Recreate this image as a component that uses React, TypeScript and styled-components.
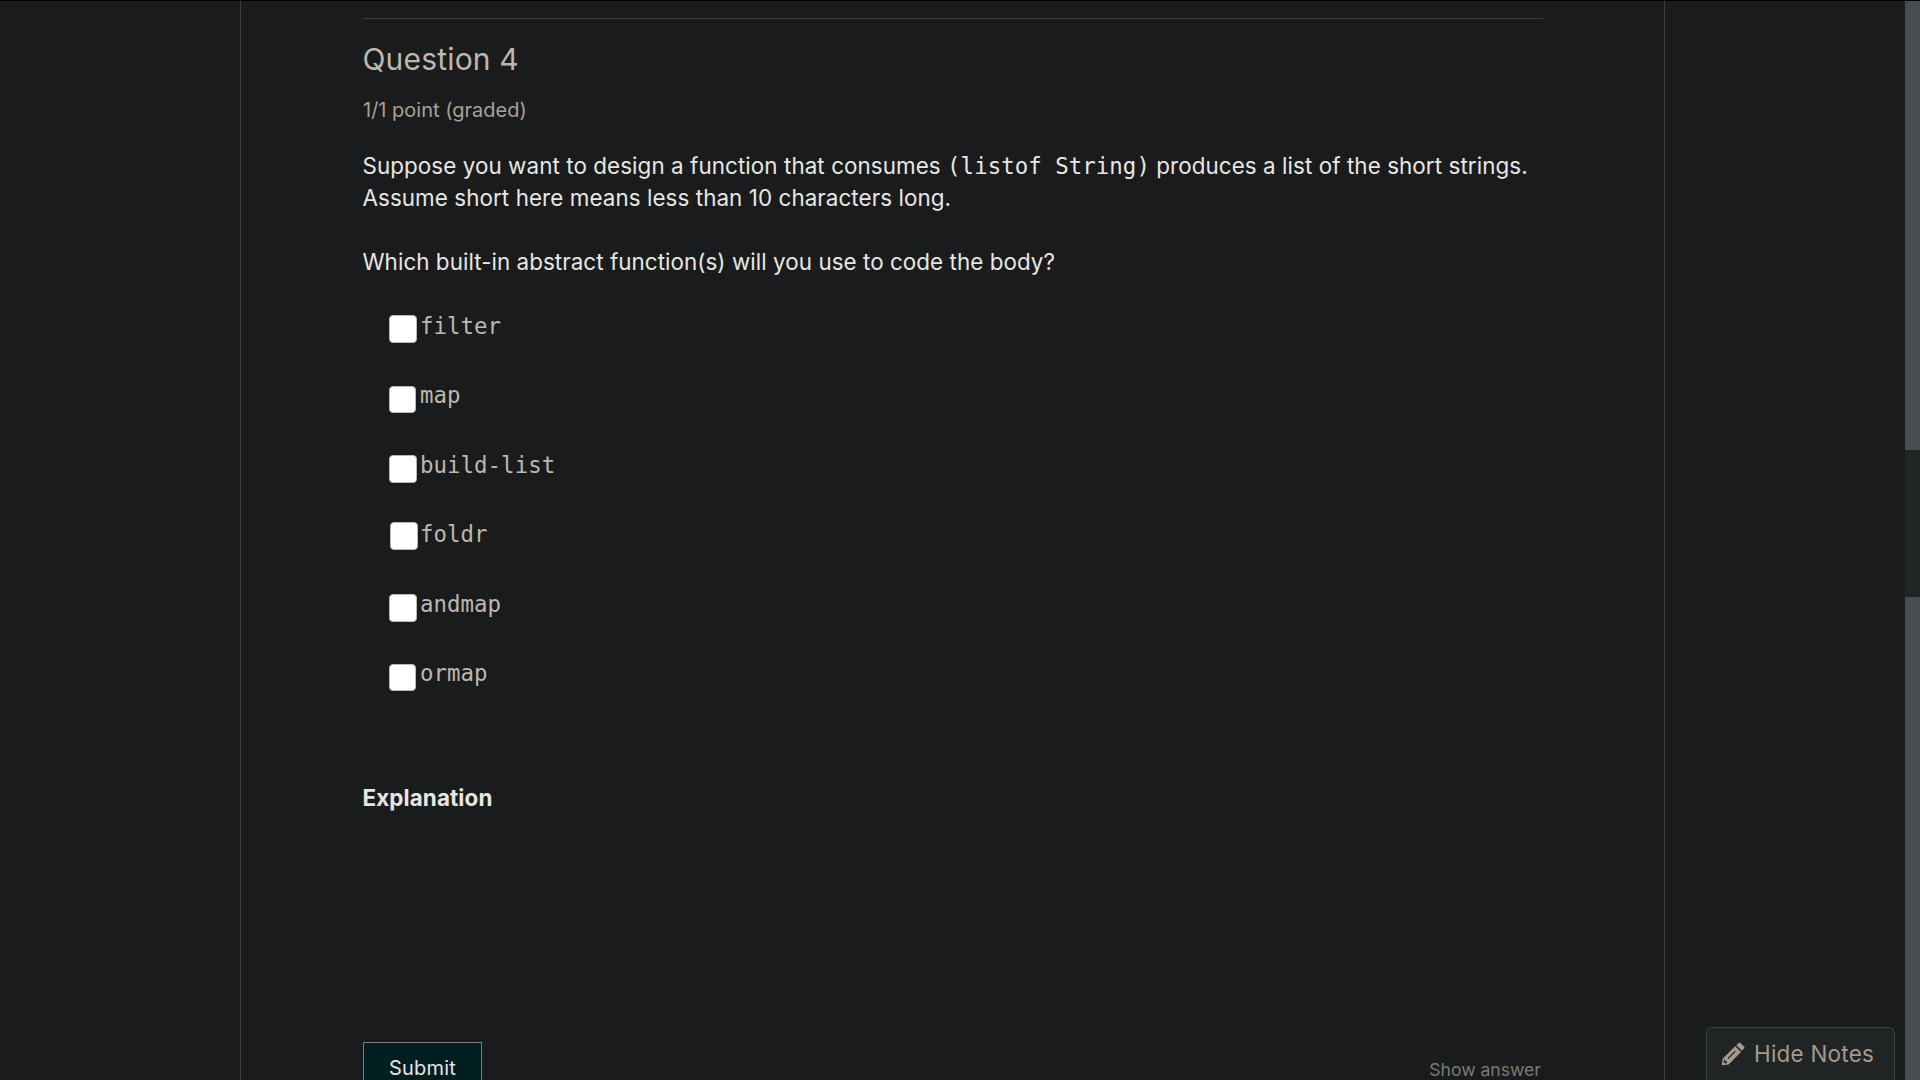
import React from 'react';
import styled, { createGlobalStyle } from 'styled-components';

const GlobalStyle = createGlobalStyle`
  * { box-sizing: border-box; }
  html, body { margin: 0; background: #1a1b1c; overflow: hidden; }
  body { font-family: Inter, "Liberation Sans", sans-serif; }
`;

const Page = styled.div`
  display: flex;
  width: 1920px;
  height: 1080px;
  overflow: hidden;
  background: #1a1b1c;
  border-top: 1px solid #000;
`;

const Gutter = styled.aside`
  width: 240px;
  flex: none;
`;

const Main = styled.main`
  width: 1425px;
  flex: none;
  border: solid #3b3f41;
  border-width: 0 1px;
  padding: 17px 121px 0 122px;
  overflow: hidden;
`;

const Problem = styled.section`
  display: flex;
  flex-direction: column;
  border-top: 1px solid #3b3f41;
`;

const Title = styled.h3`
  margin: 20px 0 0 -0.5px;
  font-size: 30px;
  font-weight: 400;
  line-height: 40px;
  letter-spacing: 0.18px;
  color: #bdb7af;
`;

const Progress = styled.div`
  margin-top: 17px;
  font-size: 20px;
  line-height: 28px;
  color: #a8a095;
`;

const Text = styled.p<{ $top: number; $spacing: number }>`
  margin: ${p => p.$top}px 0 0 -0.5px;
  font-size: 22.4px;
  line-height: 32px;
  letter-spacing: ${p => p.$spacing}px;
  color: #e8e6e3;
  white-space: nowrap;
`;

const Code = styled.code`
  font-family: "DejaVu Sans Mono", monospace;
  font-size: 22.4px;
  line-height: 1;
  letter-spacing: 0.04px;
`;

const Options = styled.div`
  display: flex;
  flex-direction: column;
  margin: 32px 0 0 26px;
`;

const Option = styled.label<{ $height: number }>`
  display: flex;
  height: ${p => p.$height}px;
  line-height: 32px;
  color: #bdb7af;
`;

const Box = styled.span<{ $size: number; $top: number; $left: number; $gap: number }>`
  flex: none;
  width: ${p => p.$size}px;
  height: ${p => p.$size}px;
  margin: ${p => p.$top}px ${p => p.$gap}px 0 ${p => p.$left}px;
  border: 1px solid #bdb7af;
  border-radius: 4px;
  background: #fff;
`;

const OptionCode = styled(Code)`
  line-height: 32px;
`;

const Explanation = styled.strong`
  margin: 93px 0 0 -0.5px;
  font-size: 22.4px;
  font-weight: 700;
  line-height: 32px;
  letter-spacing: 0.12px;
  color: #e8e6e3;
`;

const Actions = styled.div`
  display: flex;
  justify-content: space-between;
  align-items: flex-start;
  margin-top: 228px;
`;

const Submit = styled.button`
  width: 119px;
  height: 52px;
  padding: 0;
  border: 1px solid #857c6d;
  background: #001d20;
  color: #e8e6e3;
  font: 400 20px/50px Inter, sans-serif;
  letter-spacing: 0.22px;
`;

const ShowAnswer = styled.button`
  margin: 15px 2px 0 0;
  padding: 0;
  border: 0;
  background: none;
  color: #7d7a75;
  font: 400 17.6px/26px Inter, sans-serif;
`;

const Side = styled.aside`
  display: flex;
  flex: 1;
  flex-direction: column;
  justify-content: flex-end;
  align-items: flex-end;
  padding-right: 10px;
`;

const HideNotes = styled.button`
  display: flex;
  align-items: center;
  gap: 9px;
  width: 189px;
  height: 53px;
  padding: 0 0 1px 14px;
  border: 1px solid #3c4143;
  border-bottom: 0;
  border-radius: 6px 6px 0 0;
  background: #202425;
  color: #a59b8c;
  font: 400 22.4px/50px Inter, sans-serif;
  letter-spacing: 0.27px;
  white-space: nowrap;
`;

const Scroll = styled.div`
  width: 15px;
  flex: none;
  padding-top: 449px;
  background: #474c4e;
`;

const Thumb = styled.div`
  height: 147px;
  background: #202425;
`;

const Pencil = () => (
  <svg width="24" height="24" viewBox="0 0 24 24" fill="currentColor">
    <path fillRule="evenodd" d="M.7 23.2 1.8 16.6 14.2 4.2l5.8 5.8L7.6 22.4.7 23.2Zm2-3.1 1.3 1.4 1.9-.5v-1.8H4.1v-1.7h-.8l-.6 2.6Zm3.9-4 .8.8 7.4-7.4-.8-.8-7.4 7.4Z" />
    <path d="m15.3 3.2 2-2q1.2-1.2 2.4 0l3.2 3.2q1.2 1.2 0 2.4l-2 2-5.6-5.6Z" />
  </svg>
);

const options = [
  { name: 'filter', height: 69, size: 28, top: 5, left: 0, gap: 3 },
  { name: 'map', height: 70, size: 27, top: 7, left: 0, gap: 4 },
  { name: 'build-list', height: 69, size: 28, top: 6, left: 0, gap: 3 },
  { name: 'foldr', height: 70, size: 28, top: 4, left: 1, gap: 2 },
  { name: 'andmap', height: 69, size: 28, top: 6, left: 0, gap: 3 },
  { name: 'ormap', height: 32, size: 27, top: 7, left: 0, gap: 4 },
];

export default function App() {
  return (
    <Page>
      <GlobalStyle />
      <Gutter />
      <Main>
        <Problem>
          <Title>Question 4</Title>
          <Progress>1/1 point (graded)</Progress>
          <Text $top={26} $spacing={0.074}>
            Suppose you want to design a function that consumes <Code>(listof String)</Code> produces a list of the short strings.
            <br />
            Assume short here means less than 10 characters long.
          </Text>
          <Text $top={32} $spacing={0.052}>Which built-in abstract function(s) will you use to code the body?</Text>
          <Options>
            {options.map(o => (
              <Option key={o.name} $height={o.height}>
                <Box $size={o.size} $top={o.top} $left={o.left} $gap={o.gap} />
                <OptionCode>{o.name}</OptionCode>
              </Option>
            ))}
          </Options>
          <Explanation>Explanation</Explanation>
          <Actions>
            <Submit>Submit</Submit>
            <ShowAnswer>Show answer</ShowAnswer>
          </Actions>
        </Problem>
      </Main>
      <Side>
        <HideNotes>
          <Pencil />
          Hide Notes
        </HideNotes>
      </Side>
      <Scroll>
        <Thumb />
      </Scroll>
    </Page>
  );
}
